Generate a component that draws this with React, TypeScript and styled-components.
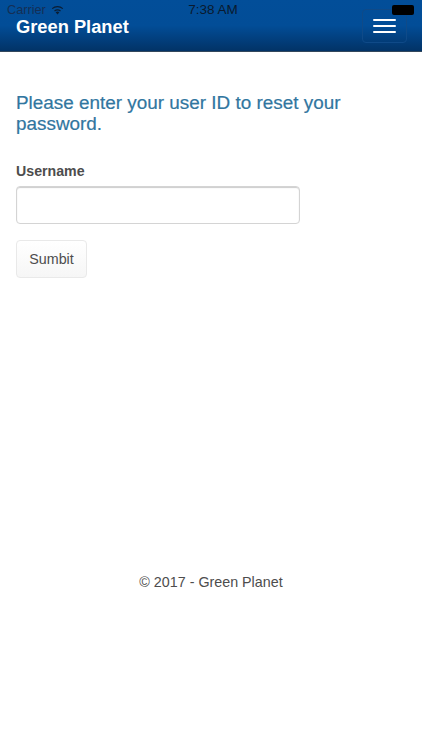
import { createGlobalStyle, styled } from "styled-components";

const GlobalStyle = createGlobalStyle`
  html, body {
    margin: 0;
    padding: 0;
    background: #fff;
  }
  * {
    box-sizing: border-box;
  }
  body {
    font-family: "Liberation Sans", Arial, sans-serif;
    color: #4d4d4d;
  }
`;

const Page = styled.div`
  height: 750px;
  display: flex;
  flex-direction: column;
  overflow: hidden;
`;

const Navbar = styled.header`
  position: relative;
  height: 52px;
  flex-shrink: 0;
  padding: 9px 16px 0;
  display: flex;
  justify-content: space-between;
  background: linear-gradient(to bottom, #024e99 0%, #024d97 50%, #023c78 82%, #023366 100%);
  border-bottom: 1px solid #33475c;
`;

const StatusBar = styled.div`
  position: absolute;
  top: 3px;
  left: 0;
  right: 0;
  height: 14px;
  padding: 0 7px;
  display: flex;
  align-items: center;
  justify-content: space-between;
  line-height: 14px;
  color: #0b1d33;
`;

const Carrier = styled.div`
  display: flex;
  align-items: center;
  gap: 5px;
  font-size: 12.7px;
  color: #142f55;
`;

const Clock = styled.div`
  position: absolute;
  left: 0;
  right: 0;
  text-align: center;
  font-size: 13.5px;
  padding-left: 4px;
  color: #0a1a2e;
`;

const Battery = styled.div`
  position: absolute;
  top: 2px;
  right: 8px;
  width: 22px;
  height: 10px;
  border-radius: 2px;
  background: #000;
`;

const Brand = styled.div`
  margin-top: 9px;
  font-size: 18.3px;
  line-height: 18px;
  font-weight: 700;
  color: #fff;
`;

const Toggle = styled.div`
  width: 45px;
  height: 34px;
  margin-right: -1px;
  border: 1px solid #0f4a88;
  border-radius: 4px;
  display: flex;
  flex-direction: column;
  align-items: center;
  justify-content: center;
  gap: 4px;
`;

const ToggleBar = styled.span`
  width: 23px;
  height: 2px;
  border-radius: 1px;
  background: #fff;
`;

const Main = styled.main`
  height: 520px;
  padding: 40px 16px 0;
`;

const Heading = styled.h2`
  margin: 0 0 27px;
  font-size: 18.9px;
  line-height: 21px;
  font-weight: 400;
  color: #31769f;
  -webkit-text-stroke: 0.2px #31769f;
`;

const Label = styled.label`
  display: block;
  margin-bottom: 5px;
  font-size: 14.2px;
  line-height: 20px;
  font-weight: 700;
  color: #4d4d4d;
`;

const Input = styled.input`
  display: block;
  width: 284px;
  height: 38px;
  margin-bottom: 16px;
  border: 1px solid #d4d4d4;
  border-radius: 4px;
  background: #fff;
  box-shadow: inset 0 1px 1px rgba(0, 0, 0, 0.2);
`;

const Button = styled.button`
  width: 71px;
  height: 38px;
  padding: 0;
  border: 1px solid #e9e9e9;
  border-radius: 4px;
  background: linear-gradient(to bottom, #fff 0%, #f6f6f6 100%);
  font-family: inherit;
  font-size: 14.3px;
  color: #4d4d4d;
`;

const Footer = styled.footer`
  text-align: center;
  font-size: 14.3px;
  line-height: 20px;
  color: #4d4d4d;
`;

const App = () => {
  return (
    <>
      <GlobalStyle />
      <Page>
        <Navbar>
          <StatusBar>
            <Carrier>
              Carrier
              <svg width="13" height="10" viewBox="0 0 13 10" aria-hidden="true">
                <path d="M6.5 9.5 4.6 7.2a3 3 0 0 1 3.8 0Z" fill="#0b1d33" />
                <path d="M3.5 6a4.8 4.8 0 0 1 6 0" fill="none" stroke="#0b1d33" strokeWidth="1.2" />
                <path d="M1.2 3.6a8.2 8.2 0 0 1 10.6 0" fill="none" stroke="#0b1d33" strokeWidth="1.2" />
              </svg>
            </Carrier>
            <Clock>7:38 AM</Clock>
            <Battery />
          </StatusBar>
          <Brand>Green Planet</Brand>
          <Toggle>
            <ToggleBar />
            <ToggleBar />
            <ToggleBar />
          </Toggle>
        </Navbar>
        <Main>
          <Heading>Please enter your user ID to reset your password.</Heading>
          <Label htmlFor="username">Username</Label>
          <Input id="username" />
          <Button>Sumbit</Button>
        </Main>
        <Footer>© 2017 - Green Planet</Footer>
      </Page>
    </>
  );
};

export default App;
